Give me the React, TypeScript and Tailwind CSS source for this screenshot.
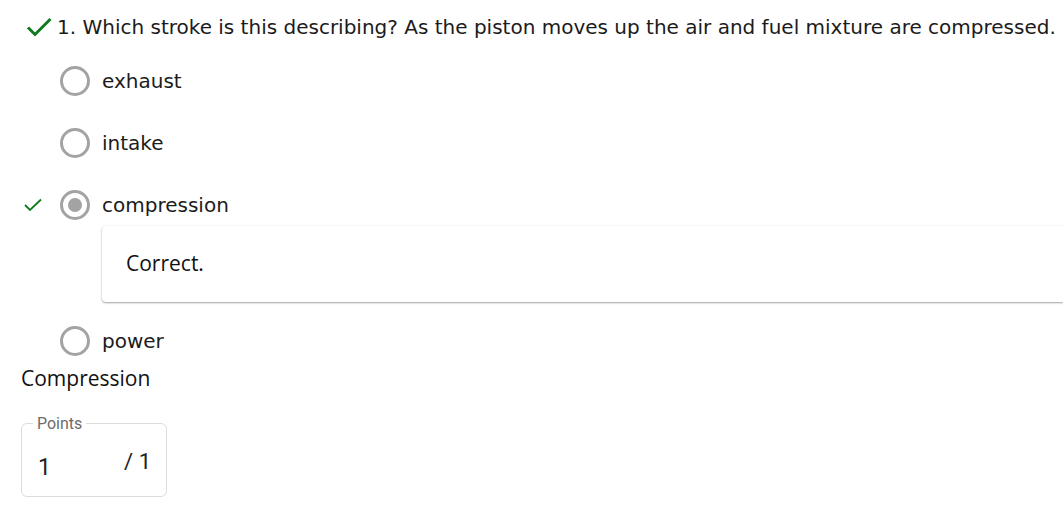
import React from "react";

function Check({ className }: { className?: string }) {
  return (
    <svg viewBox="0 0 26 20" className={className} fill="none">
      <path d="M2 10.5 L9 17.5 L24.5 2" stroke="#117a1e" strokeWidth="3" strokeLinecap="butt" strokeLinejoin="miter" />
    </svg>
  );
}

function SmallCheck() {
  return (
    <svg viewBox="0 0 18 14" className="w-[18px] h-[14px]" fill="none">
      <path d="M1 7 L6 12 L17 1.5" stroke="#117a1e" strokeWidth="1.8" />
    </svg>
  );
}

function Radio({ selected }: { selected?: boolean }) {
  return (
    <div className="w-[30px] h-[30px] rounded-full border-[3px] border-[#a3a3a3] flex items-center justify-center shrink-0 bg-white">
      {selected && <div className="w-[14px] h-[14px] rounded-full bg-[#a3a3a3]" />}
    </div>
  );
}

function Option({ label, checked, selected }: { label: string; checked?: boolean; selected?: boolean }) {
  return (
    <div className="flex items-center h-[40px]">
      <div className="w-[60px] flex items-center pl-[24px]">{checked && <SmallCheck />}</div>
      <Radio selected={selected} />
      <span className="ml-[12px] text-[20px] text-[#1b1b1b]" style={{ fontFamily: '"DejaVu Sans", sans-serif' }}>
        {label}
      </span>
    </div>
  );
}

export default function App() {
  return (
    <div className="bg-white w-[1063px] h-[522px] overflow-hidden pt-[13px]">
      <div className="flex items-center h-[28px] pl-[26px] whitespace-nowrap">
        <Check className="w-[26px] h-[20px] shrink-0" />
        <span className="ml-[5px] text-[20px] text-[#1b1b1b]" style={{ fontFamily: '"DejaVu Sans", sans-serif' }}>
          1. Which stroke is this describing? As the piston moves up the air and fuel mixture are compressed.
        </span>
      </div>
      <div className="mt-[20px] flex flex-col gap-[22px]">
        <Option label="exhaust" />
        <Option label="intake" />
      </div>
      <div className="mt-[22px]">
        <Option label="compression" checked selected />
      </div>
      <div className="mt-[1px] ml-[102px] h-[76px] bg-white rounded-l-[4px] shadow-[0_1px_2px_rgba(0,0,0,0.35),0_0_2px_rgba(0,0,0,0.08)] flex items-center pl-[24px]">
        <span className="text-[21px] text-[#111]" style={{ fontFamily: '"Open Sans", sans-serif' }}>Correct.</span>
      </div>
      <div className="mt-[19px]">
        <Option label="power" />
      </div>
      <div className="h-[36px] flex items-center pl-[21px] text-[21px] text-[#111]" style={{ fontFamily: '"Open Sans", sans-serif' }}>
        Compression
      </div>
      <fieldset className="mt-[18px] ml-[21px] w-[146px] h-[82px] border border-[#dcdcdc] rounded-[6px] px-[15px] pb-[8px]" style={{ fontFamily: 'Roboto, sans-serif' }}>
        <legend className="text-[16px] text-[#6b6b6b] px-[4px] -ml-[4px] leading-[17px]">Points</legend>
        <div className="flex items-start justify-between mt-[18px]">
          <span className="text-[23px] text-[#222] mt-[7px] leading-[22px] pl-[1px]">1</span>
          <span className="text-[22px] text-[#222] leading-[22px] mt-[1px]">/ 1</span>
        </div>
      </fieldset>
    </div>
  );
}
